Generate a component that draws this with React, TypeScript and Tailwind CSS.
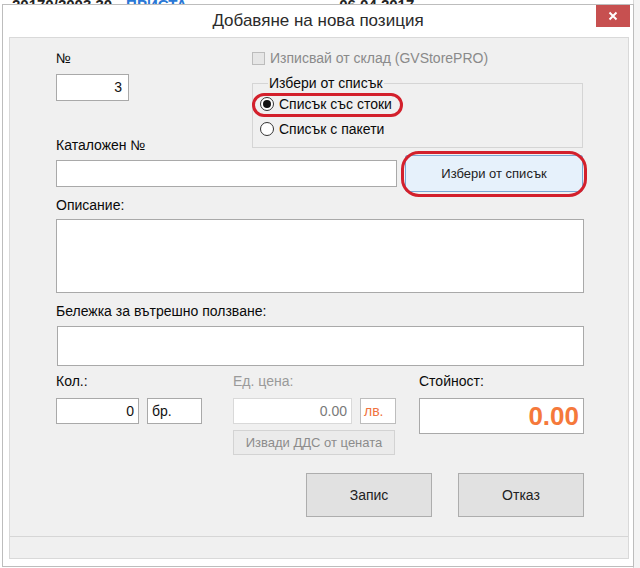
import React from "react";

const labelCls = "text-[14px] leading-[16px] text-[#0a0a0a] whitespace-nowrap";
const inputCls = "bg-white border border-[#a9a9a9]";

const Radio: React.FC<{ checked?: boolean; label: string }> = ({ checked, label }) => (
  <div className="flex items-center h-[20px]">
    <span className="w-[14px] h-[14px] rounded-full border border-[#333] bg-white flex items-center justify-center">
      {checked && <span className="w-[8px] h-[8px] rounded-full bg-[#111]" />}
    </span>
    <span className="ml-[5px] text-[14px] leading-[16px] text-[#0a0a0a]">{label}</span>
  </div>
);

const App: React.FC = () => {
  return (
    <div className="relative w-[640px] h-[568px] overflow-hidden bg-white font-['Liberation_Sans',Arial,sans-serif]">
      {/* таблица отзад */}
      <div className="flex items-end h-[6px] overflow-hidden text-[15px] font-bold leading-[18px] text-[#222]">
        <div className="flex -mb-[8px]">
          <span className="ml-[12px]">20170/2003 30</span>
          <span className="ml-[14px] text-[#2a78d6]">ПРИСТА</span>
          <span className="ml-[152px]">06.04.2017</span>
        </div>
      </div>
      <div className="absolute right-0 top-0 w-[7px] h-full bg-[#f4f4f4] border-l border-[#d8d8d8]" />

      {/* прозорец */}
      <div className="absolute left-[2px] top-[4px] w-[632px] h-[563px] border border-[#bdbdbd] bg-white flex flex-col">
        <div className="relative h-[32px] flex items-center justify-center">
          <span className="text-[17px] text-[#2b2b2b]">Добавяне на нова позиция</span>
          <div className="absolute right-[3px] top-0 w-[34px] h-[22px] bg-[#c75050] flex items-center justify-center">
            <svg width="10" height="10" viewBox="0 0 10 10">
              <path d="M1.5 1.5 L8.5 8.5 M8.5 1.5 L1.5 8.5" stroke="#fff" strokeWidth="2" />
            </svg>
          </div>
        </div>

        <div className="flex-1 flex pl-[6px] pr-[4px] pb-[7px]">
          <div className="flex-1 flex flex-col bg-[#f0f0f0] border border-[#d9d9d9]">
            <div className="relative flex-1 pl-[46px] pr-[43px]">
              {/* горна част */}
              <div className="flex">
                <div className="w-[196px] flex flex-col">
                  <div className={`mt-[12px] ${labelCls}`}>№</div>
                  <div className={`mt-[8px] w-[73px] h-[27px] ${inputCls} flex items-center justify-end pr-[6px] text-[14px] text-[#111]`}>
                    3
                  </div>
                  <div className={`mt-[36px] ${labelCls}`}>Каталожен №</div>
                </div>
                <div className="w-[331px] flex flex-col">
                  <div className="mt-[12px] flex items-center h-[16px]">
                    <span className="w-[13px] h-[13px] border border-[#bcbcbc] bg-[#e6e6e6]" />
                    <span className="ml-[5px] text-[14px] leading-[16px] text-[#8a8a8a] whitespace-nowrap">
                      Изписвай от склад (GVStorePRO)
                    </span>
                  </div>
                  <fieldset className="mt-[9px] border border-[#d5d5d5] pl-[7px] pb-[8px]">
                    <legend className="ml-[8px] px-[1px] text-[14px] leading-[16px] text-[#0a0a0a]">
                      Избери от списък
                    </legend>
                    <div className="mt-[3px]">
                      <Radio checked label="Списък със стоки" />
                    </div>
                    <div className="mt-[5px]">
                      <Radio label="Списък с пакети" />
                    </div>
                  </fieldset>
                </div>
              </div>

              {/* каталожен № */}
              <div className="mt-[2px] flex items-center">
                <div className={`w-[341px] h-[27px] ${inputCls}`} />
                <button className="ml-[8px] w-[178px] h-[37px] bg-[#e6f1fb] border border-[#7aa7d3] rounded-[2px] text-[13px] text-[#222]">
                  Избери от списък
                </button>
              </div>

              <div className={`mt-[5px] ${labelCls}`}>Описание:</div>
              <div className={`mt-[6px] w-[528px] h-[74px] ${inputCls}`} />

              <div className={`mt-[10px] ${labelCls}`}>Бележка за вътрешно ползване:</div>
              <div className={`mt-[7px] ml-[1px] w-[527px] h-[40px] ${inputCls}`} />

              {/* количество / цена / стойност */}
              <div className="mt-[7px] flex">
                <div className="w-[146px] flex flex-col">
                  <div className={labelCls}>Кол.:</div>
                  <div className="mt-[9px] flex">
                    <div className={`w-[83px] h-[26px] ${inputCls} flex items-center justify-end pr-[4px] text-[14px] text-[#111]`}>
                      0
                    </div>
                    <div className={`ml-[8px] w-[55px] h-[26px] ${inputCls} flex items-center pl-[4px] text-[14px] text-[#111]`}>
                      бр.
                    </div>
                  </div>
                </div>
                <div className="ml-[31px] w-[163px] flex flex-col">
                  <div className="text-[14px] leading-[16px] text-[#9a9a9a]">Ед. цена:</div>
                  <div className="mt-[9px] flex">
                    <div className="w-[119px] h-[26px] bg-white border border-[#d9d9d9] flex items-center justify-end pr-[4px] text-[14px] text-[#7a7a7a]">
                      0.00
                    </div>
                    <div className="ml-[8px] w-[36px] h-[26px] bg-white border border-[#bdbdbd] flex items-center pl-[3px] text-[14px] text-[#f07340]">
                      лв.
                    </div>
                  </div>
                  <div className="mt-[6px] w-[162px] h-[25px] bg-[#ebebeb] border border-[#d3d3d3] flex items-center justify-center text-[13px] text-[#8c8c8c]">
                    Извади ДДС от цената
                  </div>
                </div>
                <div className="ml-[23px] w-[165px] flex flex-col">
                  <div className={labelCls}>Стойност:</div>
                  <div className={`mt-[9px] h-[36px] ${inputCls} flex items-center justify-end pr-[4px] text-[26px] font-bold text-[#f5793b]`}>
                    0.00
                  </div>
                </div>
              </div>

              {/* бутони */}
              <div className="mt-[18px] mr-[1px] flex justify-end">
                <button className="w-[126px] h-[44px] bg-[#e1e1e1] border border-[#adadad] text-[14px] text-[#222]">
                  Запис
                </button>
                <button className="ml-[26px] w-[126px] h-[44px] bg-[#e1e1e1] border border-[#adadad] text-[14px] text-[#222]">
                  Отказ
                </button>
              </div>

              {/* червени маркировки */}
              <div className="absolute left-[242px] top-[55px] w-[151px] h-[24px] rounded-full border-[3px] border-[#d3202c]" />
              <div className="absolute left-[391px] top-[113px] w-[186px] h-[46px] rounded-[18px] border-[3px] border-[#d3202c]" />
            </div>
            <div className="h-[22px] border-t border-[#d6d6d6]" />
          </div>
        </div>
      </div>
    </div>
  );
};

export default App;
